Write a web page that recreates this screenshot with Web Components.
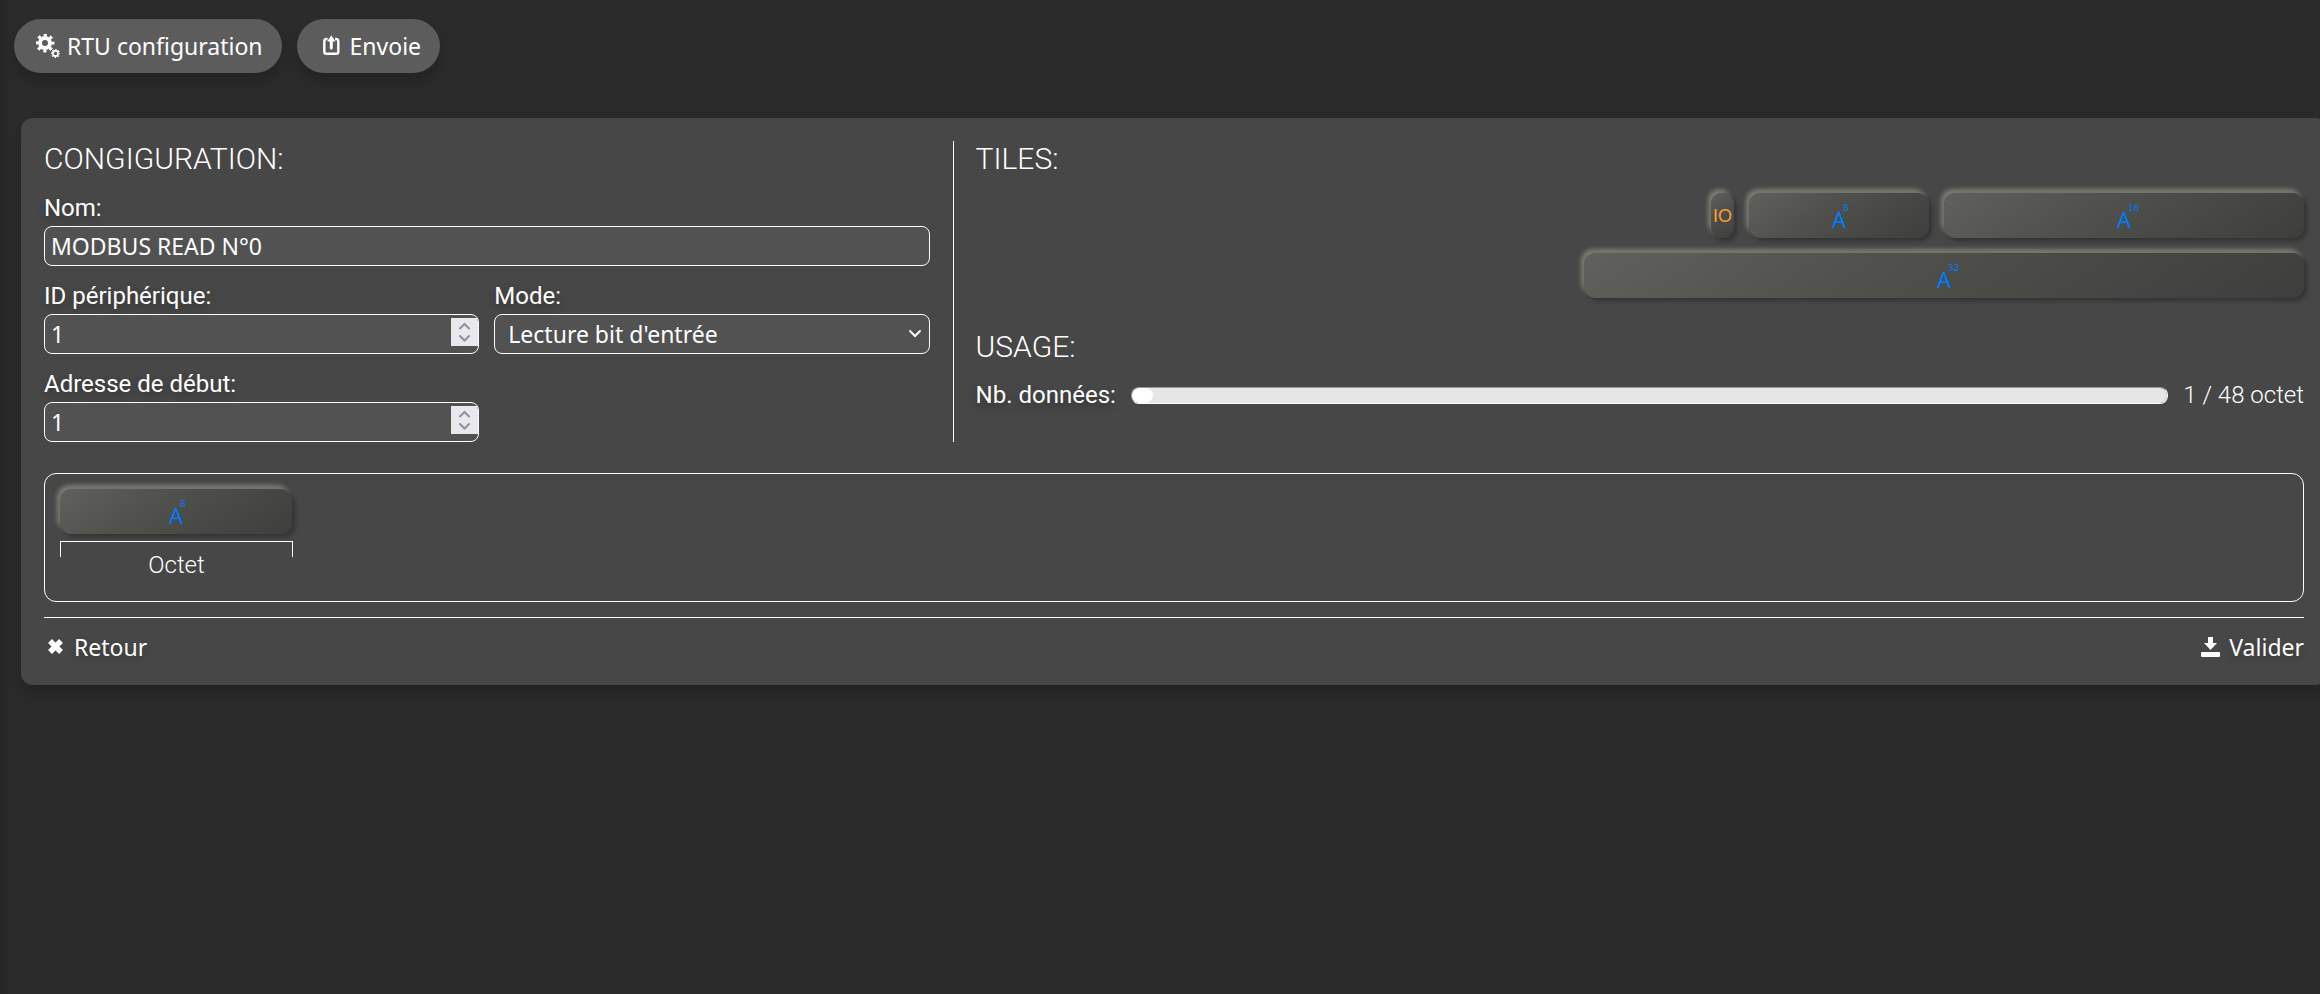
<!DOCTYPE html>
<html lang="fr">
<head>
<meta charset="utf-8">
<title>RTU configuration</title>
<style>
  html, body { margin: 0; }
  body {
    min-height: 100vh;
    overflow-x: hidden;
    background: #2b2b2b linear-gradient(90deg, #262626, #2b2b2b) no-repeat 0 0 / 10px 100%;
    color: #fff;
    font: 400 24px/28px Roboto, sans-serif;
    --ui-font: "Noto Sans", sans-serif;
    --ui-size: 23px;
    --line: 1px solid #fff;
  }
</style>
</head>
<body>
<modbus-app></modbus-app>

<script>
const ICONS = {
  gears: '<svg width="24" height="24" viewBox="0 0 24 24" fill="none" stroke="#fff"><circle cx="9" cy="9" r="5" stroke-width="4"/><circle cx="9" cy="9" r="8" stroke-width="3" stroke-dasharray="3.14 3.14" stroke-dashoffset="1.57"/><circle cx="19.5" cy="19.5" r="2.6" stroke-width="1.6"/><circle cx="19.5" cy="19.5" r="3.8" stroke-width="1.4" stroke-dasharray="1.5 1.484" stroke-dashoffset=".75"/></svg>',
  send: '<svg width="24" height="24" viewBox="0 0 24 24"><path d="M8.500 5H7.500q-2.200 0-2.200 2.200V17.800q0 2 2 2h10q2 0 2-2V7.200Q19.300 5 17.100 5h-1" fill="none" stroke="#fff" stroke-width="2.400"/><path d="M12.300 1.500 16.500 7.500h-2.700v7l-1.500 1.500-1.500-1.500v-7H8.100z" fill="#fff"/></svg>',
  cross: '<svg width="24" height="24" viewBox="0 0 24 24"><path d="M6 6 17 17M17 6 6 17" stroke="#fff" stroke-width="5.500"/></svg>',
  download: '<svg width="24" height="24" viewBox="0 0 24 24"><path d="M9 2h5v6h4l-6.500 7L5 8h4z" fill="#fff"/><rect x="2" y="17" width="19" height="5" rx="1" fill="#fff"/></svg>'
};

class Base extends HTMLElement {
  connectedCallback() {
    if (this.shadowRoot) return;
    this.attachShadow({ mode: 'open' }).innerHTML =
      '<style>*{box-sizing:border-box}' + this.css() + '</style>' + this.html();
  }
  a(name) { return this.getAttribute(name) || ''; }
}

customElements.define('ui-icon', class extends Base {
  css() { return ':host{display:inline-flex;flex:none}svg{display:block}'; }
  html() { return ICONS[this.a('name')]; }
});

customElements.define('pill-button', class extends Base {
  css() { return `
    :host{display:block}
    button{display:flex;align-items:center;gap:7px;height:54px;padding:0 19px 0 22px;border:0;border-radius:27px;
      background:#5c5c5c;color:#fff;font:400 var(--ui-size)/28px var(--ui-font);
      box-shadow:0 8px 16px rgba(0,0,0,.2)}`; }
  html() { return `<button type="button"><ui-icon name="${this.a('icon')}"></ui-icon><slot></slot></button>`; }
});

customElements.define('link-button', class extends Base {
  css() { return `
    :host{display:block}
    button{display:flex;align-items:center;gap:6px;padding:0;border:0;background:none;color:#fff;
      font:400 var(--ui-size)/28px var(--ui-font);text-shadow:0 4px 8px rgba(0,0,0,.2)}`; }
  html() { return `<button type="button"><ui-icon name="${this.a('icon')}"></ui-icon><slot></slot></button>`; }
});

customElements.define('section-title', class extends Base {
  css() { return ':host{display:block}h2{margin:0;font:300 30px/36px Roboto,sans-serif}'; }
  html() { return '<h2><slot></slot></h2>'; }
});

const FIELD_CSS = `
  :host{display:block;min-width:0}
  label{display:block;margin-bottom:4px;line-height:28px;text-shadow:0 4px 8px rgba(0,0,0,.3)}
  input,select{display:block;width:100%;height:40px;margin:0;border:var(--line);border-radius:8px;outline:0;
    background:#525252;color:#fff;font:400 var(--ui-size)/28px var(--ui-font);padding:0 6px}`;

customElements.define('text-field', class extends Base {
  css() { return FIELD_CSS; }
  html() { return `<label for="f">${this.a('label')}</label><input id="f" type="text" value="${this.a('value')}">`; }
});

customElements.define('number-field', class extends Base {
  css() { return FIELD_CSS + `
    input{padding-right:0}
    input::-webkit-inner-spin-button{-webkit-appearance:none;opacity:1;width:27px;height:28px;margin:0;
      background:#e9e9ed url("data:image/svg+xml,%3Csvg xmlns='http://www.w3.org/2000/svg' width='27' height='28' fill='none' stroke='%238f8f9d' stroke-width='2' stroke-linecap='round'%3E%3Cpath d='M9 10.500l4.500-4.500 4.500 4.500M9 18l4.500 4.500 4.500-4.500'/%3E%3C/svg%3E") center no-repeat}`; }
  html() { return `<label for="f">${this.a('label')}</label><input id="f" type="number" value="${this.a('value')}">`; }
});

customElements.define('select-field', class extends Base {
  css() { return FIELD_CSS + `
    select{appearance:none;padding:0 30px 0 13px;
      background:#525252 url("data:image/svg+xml,%3Csvg xmlns='http://www.w3.org/2000/svg' width='14' height='10' fill='none' stroke='white' stroke-width='2' stroke-linecap='round'%3E%3Cpath d='M2 2l5 5 5-5'/%3E%3C/svg%3E") right 7px center no-repeat}`; }
  html() { return `<label for="f">${this.a('label')}</label><select id="f"><option>${this.a('value')}</option></select>`; }
});

customElements.define('data-tile', class extends Base {
  css() { return `
    :host{display:flex;align-items:center;justify-content:center;box-sizing:border-box;height:45px;border-radius:12px;
      background:linear-gradient(145deg,#60605c,#50504c 40%,#3e3e3d);
      box-shadow:3px 3px 4px #333,-3px -4px 4px #7c7c74;
      color:#007bff;font:400 22px/30px var(--ui-font);padding-top:7px}
    :host([kind=bit]){color:#ff9d2f;font:400 18px/30px "Liberation Sans",sans-serif;padding-top:0}
    span{position:relative}
    sup{position:absolute;top:-1px;left:calc(100% - 3px);font:400 9px/10px "DejaVu Sans",sans-serif}`; }
  html() { return `<span><slot></slot>${this.a('bits') ? `<sup>${this.a('bits')}</sup>` : ''}</span>`; }
});

customElements.define('tile-palette', class extends Base {
  css() { return `
    :host{display:flex;flex-wrap:wrap;justify-content:flex-end;gap:15px;padding-left:45%}
    data-tile{width:180px}
    data-tile[kind=bit]{width:23px}
    data-tile[bits="16"]{width:360px}
    data-tile[bits="32"]{width:720px}`; }
  html() { return `<data-tile kind="bit">IO</data-tile><data-tile bits="8">A</data-tile>
    <data-tile bits="16">A</data-tile><data-tile bits="32">A</data-tile>`; }
});

customElements.define('usage-meter', class extends Base {
  css() { return `
    :host{display:flex;align-items:center;gap:15px}
    label{text-shadow:0 4px 8px rgba(0,0,0,.3)}
    output{font-weight:300}
    progress{appearance:none;flex:1;min-width:0;height:17px;border:1px solid;border-color:#9a9a9a #fff #fff #9a9a9a;
      border-radius:8px;overflow:hidden;background:#e6e6e6}
    progress::-webkit-progress-bar{background:#e6e6e6}
    progress::-webkit-progress-value{background:#fff;border-radius:8px}`; }
  html() { const v = this.a('value'), m = this.a('max'); return `<label for="p">Nb. données:</label>
    <progress id="p" value="${v}" max="${m}"></progress><output for="p">${v} / ${m} octet</output>`; }
});

customElements.define('data-slot', class extends Base {
  css() { return `
    :host{display:block;width:233px}
    ::slotted(data-tile){margin-right:1px}
    .bracket{height:16px;margin-top:7px;border:var(--line);border-bottom:0}
    .name{margin-top:-6px;text-align:center;font-weight:300}`; }
  html() { return `<slot></slot><div class="bracket"></div><div class="name">${this.a('name')}</div>`; }
});

customElements.define('config-panel', class extends Base {
  css() { return `
    :host{display:block;box-sizing:border-box;margin:45px -7px 0 21px;padding:23px 23px 14px;border-radius:12px;
      background:#474747;box-shadow:0 8px 16px rgba(0,0,0,.2)}
    .columns{display:flex}
    .config{flex:2 1 0;min-width:0;padding-right:23px;border-right:var(--line)}
    .info{flex:3 1 0;min-width:0;padding-left:22px}
    .fields{display:grid;grid-template-columns:1fr 1fr;gap:16px 15px;margin-top:17px}
    .wide{grid-column:1/-1}
    tile-palette{margin:16px 0 31px}
    usage-meter{margin-top:16px}
    .frame{display:flex;gap:15px;margin-top:31px;min-height:129px;padding:15px;border:var(--line);border-radius:12px}
    footer{display:flex;justify-content:space-between;margin-top:15px;padding:15px 0 10px;border-top:var(--line)}`; }
  html() { return `
    <div class="columns">
      <section class="config">
        <section-title>CONGIGURATION:</section-title>
        <div class="fields">
          <text-field class="wide" label="Nom:" value="MODBUS READ N°0"></text-field>
          <number-field label="ID périphérique:" value="1"></number-field>
          <select-field label="Mode:" value="Lecture bit d'entrée"></select-field>
          <number-field label="Adresse de début:" value="1"></number-field>
        </div>
      </section>
      <section class="info">
        <section-title>TILES:</section-title>
        <tile-palette></tile-palette>
        <section-title>USAGE:</section-title>
        <usage-meter value="1" max="48"></usage-meter>
      </section>
    </div>
    <div class="frame"><data-slot name="Octet"><data-tile bits="8">A</data-tile></data-slot></div>
    <footer>
      <link-button icon="cross">Retour</link-button>
      <link-button icon="download">Valider</link-button>
    </footer>`; }
});

customElements.define('modbus-app', class extends Base {
  css() { return `
    :host{display:block}
    nav{display:flex;gap:15px;padding:19px 14px 0}`; }
  html() { return `
    <nav><pill-button icon="gears">RTU configuration</pill-button><pill-button icon="send">Envoie</pill-button></nav>
    <config-panel></config-panel>`; }
});
</script>
</body>
</html>
